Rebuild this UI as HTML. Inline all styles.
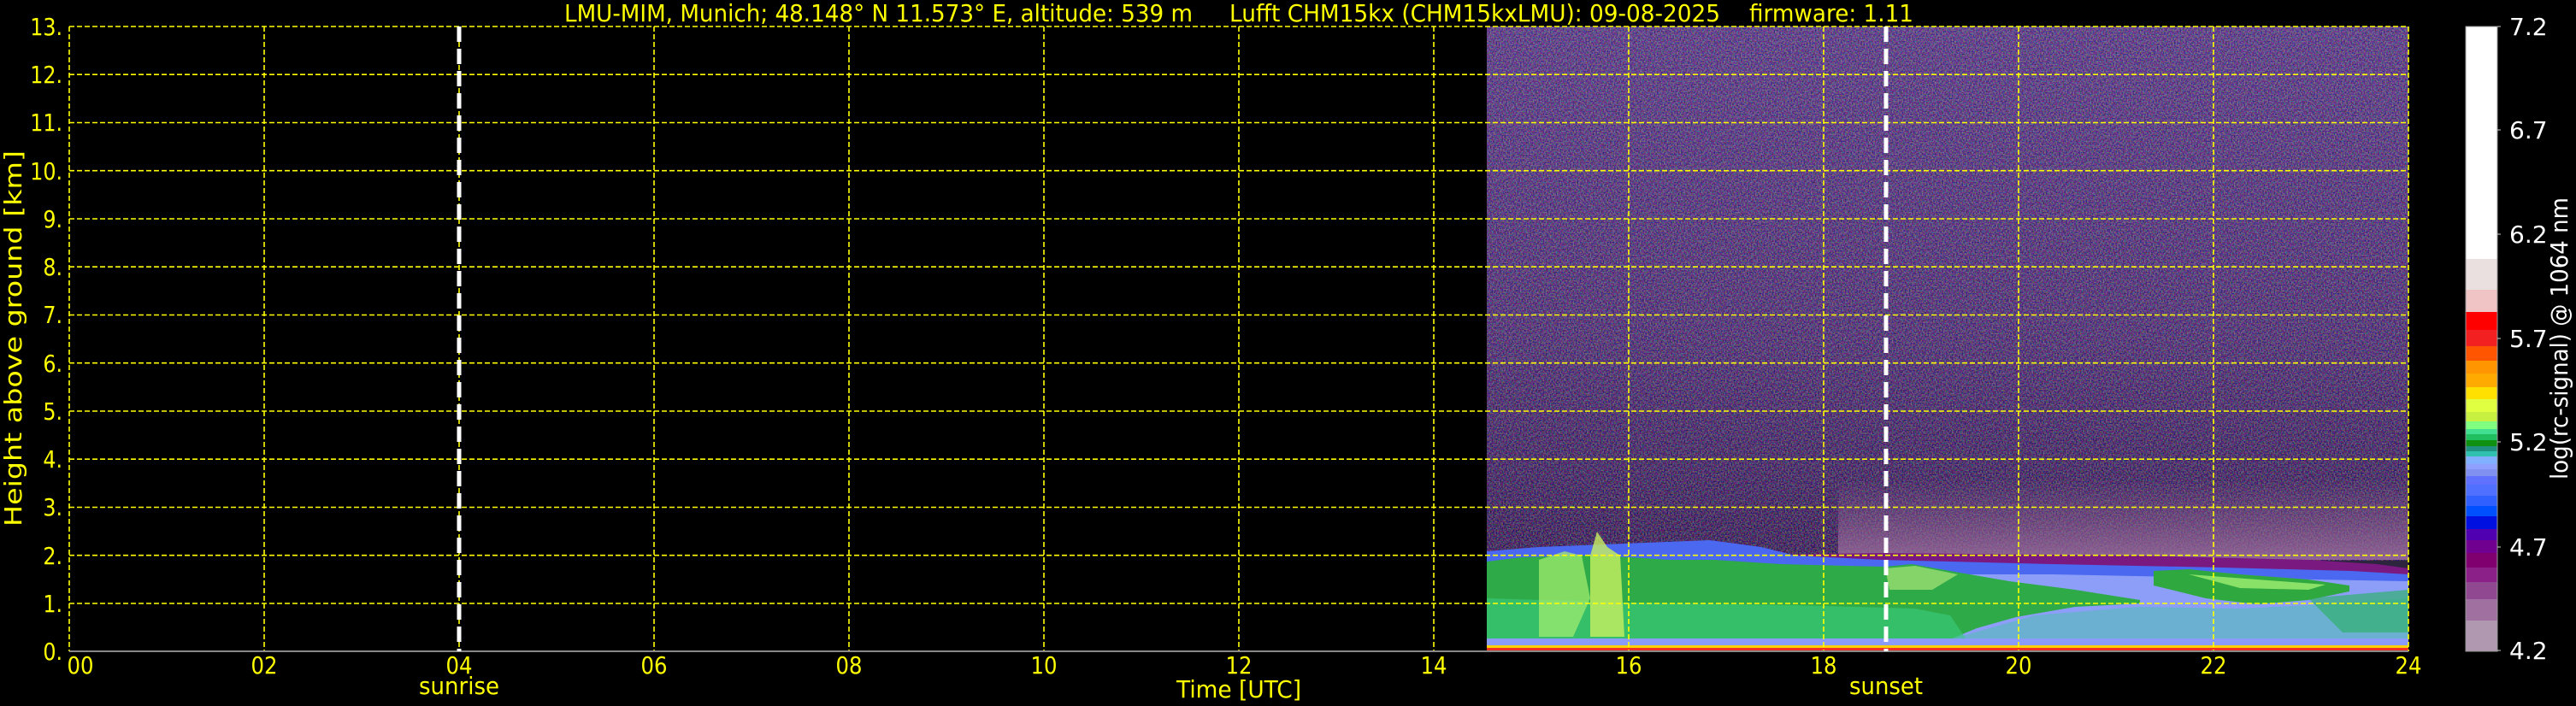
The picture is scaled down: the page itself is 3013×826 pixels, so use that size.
<!DOCTYPE html>
<html><head><meta charset="utf-8"><style>
html,body{margin:0;padding:0;background:#000;}
svg{display:block}
</style></head><body>
<svg width="3013" height="826" viewBox="0 0 3013 826" xmlns="http://www.w3.org/2000/svg" font-family="DejaVu Sans, Liberation Sans, sans-serif">
<defs>
<linearGradient id="bg" x1="0" y1="0" x2="0" y2="1">
<stop offset="0" stop-color="#544676"/><stop offset="0.5" stop-color="#45385f"/><stop offset="0.8" stop-color="#2e2540"/><stop offset="1" stop-color="#2a2038"/>
</linearGradient>
<linearGradient id="pink" x1="0" y1="0" x2="0" y2="1">
<stop offset="0" stop-color="#9a6a9a" stop-opacity="0"/><stop offset="1" stop-color="#a070a0" stop-opacity="0.8"/>
</linearGradient>
<filter id="nz" x="0" y="0" width="100%" height="100%">
<feTurbulence type="fractalNoise" baseFrequency="0.6" numOctaves="1" seed="5"/>
<feColorMatrix type="matrix" values="2.4 0 0 0 -0.9  0 2.4 0 0 -1.1  0 0 2.4 0 -0.7  0 0 0 0 0.35"/>
</filter>
</defs>
<rect width="3013" height="826" fill="#000"/>
<rect x="1739" y="31" width="1078" height="731" fill="url(#bg)"/>
<rect x="1739" y="31" width="1078" height="625" filter="url(#nz)"/>
<rect x="2150" y="560" width="667" height="95" fill="url(#pink)"/>
<polygon points="2000,650 2200,647 2500,650 2700,655 2780,660 2817,665 2817,675 2700,668 2500,664 2300,662 2100,660 2000,658" fill="#7a1a80"/>
<polygon points="1739,645 1800,640 1900,636 2000,632 2060,640 2100,650 2200,655 2400,660 2600,664 2750,668 2817,672 2817,750 1739,750" fill="#4a68f0"/>
<polygon points="2150,672 2400,672 2600,676 2817,680 2817,750 2150,750" fill="#8c9ef8"/>
<polygon points="1739,657 1780,652 1853,650 1907,652 1952,655 2006,655 2083,660 2159,662 2205,663 2236,660 2281,668 2350,680 2427,690 2503,702 2503,706 2427,710 2358,722 2312,735 2281,748 1739,748" fill="#2faa48"/>
<polygon points="1739,700 1900,705 2100,708 2240,712 2281,720 2300,748 1739,748" fill="#38c878" opacity="0.7"/>
<polygon points="2281,748 2380,720 2500,710 2620,712 2700,708 2817,700 2817,748" fill="#50c0b0" opacity="0.55"/>
<polygon points="2700,700 2817,690 2817,740 2740,740" fill="#30b070" opacity="0.7"/>
<polygon points="2519,668 2560,666 2620,672 2700,678 2748,685 2748,692 2700,702 2640,707 2580,700 2519,685" fill="#30a840"/>
<polygon points="2560,672 2640,678 2720,684 2700,690 2620,688" fill="#a0f070" opacity="0.8"/>
<polygon points="1800,655 1830,645 1850,650 1860,700 1840,745 1800,745" fill="#a8f070" opacity="0.7"/>
<polygon points="1860,650 1868,622 1880,640 1895,650 1900,745 1860,745" fill="#c8f060" opacity="0.8"/>
<polygon points="2205,665 2240,662 2290,672 2260,690 2210,690" fill="#c0f080" opacity="0.6"/>
<rect x="1739" y="747" width="1078" height="8" fill="#8a9cf8"/>
<rect x="1739" y="755" width="1078" height="3" fill="#ffd000"/>
<rect x="1739" y="758" width="1078" height="4" fill="#f03020"/>
<g stroke="#ffff00" stroke-width="1.6" stroke-dasharray="6,3" fill="none">
<path d="M81 31H2817M81 87.2H2817M81 143.5H2817M81 199.7H2817M81 256H2817M81 312.2H2817M81 368.5H2817M81 424.7H2817M81 481H2817M81 537.2H2817M81 593.5H2817M81 649.7H2817M81 706H2817M81 762H2817"/>
<path d="M81 31V762M309 31V762M537 31V762M765 31V762M993 31V762M1221 31V762M1449 31V762M1677 31V762M1905 31V762M2133 31V762M2361 31V762M2589 31V762M2817 31V762"/>
</g>
<line x1="81" y1="762" x2="2817" y2="762" stroke="#888" stroke-width="2"/>
<g stroke="#fff" stroke-width="5" stroke-dasharray="18,8">
<line x1="537" y1="31" x2="537" y2="762"/>
<line x1="2206" y1="31" x2="2206" y2="762"/>
</g>
<g font-size="28" fill="#ffff00">
<text x="660" y="25" textLength="735" lengthAdjust="spacingAndGlyphs">LMU-MIM, Munich; 48.148° N 11.573° E, altitude: 539 m</text>
<text x="1438" y="25" textLength="574" lengthAdjust="spacingAndGlyphs">Lufft CHM15kx (CHM15kxLMU): 09-08-2025</text>
<text x="2046" y="25" textLength="192" lengthAdjust="spacingAndGlyphs">firmware: 1.11</text>
</g>
<g font-size="28" fill="#ffff00" text-anchor="end" transform="scale(0.85,1)">
<text x="86" y="41">13.</text><text x="86" y="97">12.</text><text x="86" y="153">11.</text><text x="86" y="210">10.</text><text x="86" y="266">9.</text><text x="86" y="322">8.</text><text x="86" y="378">7.</text><text x="86" y="435">6.</text><text x="86" y="491">5.</text><text x="86" y="547">4.</text><text x="86" y="603">3.</text><text x="86" y="660">2.</text><text x="86" y="716">1.</text><text x="86" y="772">0.</text>
</g>
<text transform="translate(25,396) rotate(-90)" font-size="28" fill="#ffff00" text-anchor="middle" textLength="440" lengthAdjust="spacingAndGlyphs">Height above ground [km]</text>
<g font-size="28" fill="#ffff00" text-anchor="middle">
<text x="94" y="788" textLength="31" lengthAdjust="spacingAndGlyphs">00</text>
<text x="309" y="788" textLength="31" lengthAdjust="spacingAndGlyphs">02</text>
<text x="537" y="788" textLength="31" lengthAdjust="spacingAndGlyphs">04</text>
<text x="765" y="788" textLength="31" lengthAdjust="spacingAndGlyphs">06</text>
<text x="993" y="788" textLength="31" lengthAdjust="spacingAndGlyphs">08</text>
<text x="1221" y="788" textLength="31" lengthAdjust="spacingAndGlyphs">10</text>
<text x="1449" y="788" textLength="31" lengthAdjust="spacingAndGlyphs">12</text>
<text x="1677" y="788" textLength="31" lengthAdjust="spacingAndGlyphs">14</text>
<text x="1905" y="788" textLength="31" lengthAdjust="spacingAndGlyphs">16</text>
<text x="2133" y="788" textLength="31" lengthAdjust="spacingAndGlyphs">18</text>
<text x="2361" y="788" textLength="31" lengthAdjust="spacingAndGlyphs">20</text>
<text x="2589" y="788" textLength="31" lengthAdjust="spacingAndGlyphs">22</text>
<text x="2817" y="788" textLength="31" lengthAdjust="spacingAndGlyphs">24</text>
<text x="537" y="812" textLength="94" lengthAdjust="spacingAndGlyphs">sunrise</text>
<text x="2206" y="812" textLength="86" lengthAdjust="spacingAndGlyphs">sunset</text>
<text x="1449" y="816" textLength="146" lengthAdjust="spacingAndGlyphs">Time [UTC]</text>
</g>
<g>
<rect x="2884" y="31" width="37" height="272" fill="#ffffff"/>
<rect x="2884" y="303" width="37" height="36" fill="#ebe0e0"/>
<rect x="2884" y="339" width="37" height="26" fill="#f0c4c4"/>
<rect x="2884" y="365" width="37" height="21" fill="#ff0000"/>
<rect x="2884" y="386" width="37" height="19" fill="#f22020"/>
<rect x="2884" y="405" width="37" height="17" fill="#ff5500"/>
<rect x="2884" y="422" width="37" height="15" fill="#ff9500"/>
<rect x="2884" y="437" width="37" height="16" fill="#ffaa00"/>
<rect x="2884" y="453" width="37" height="14" fill="#ffe000"/>
<rect x="2884" y="467" width="37" height="15" fill="#e0ff40"/>
<rect x="2884" y="482" width="37" height="11" fill="#c8f040"/>
<rect x="2884" y="493" width="37" height="9" fill="#80ff80"/>
<rect x="2884" y="502" width="37" height="6" fill="#40e090"/>
<rect x="2884" y="508" width="37" height="7" fill="#20c060"/>
<rect x="2884" y="515" width="37" height="7" fill="#109010"/>
<rect x="2884" y="522" width="37" height="6" fill="#209080"/>
<rect x="2884" y="528" width="37" height="6" fill="#30c0b0"/>
<rect x="2884" y="534" width="37" height="9" fill="#80b0ff"/>
<rect x="2884" y="543" width="37" height="6" fill="#90a0ff"/>
<rect x="2884" y="549" width="37" height="8" fill="#8090f0"/>
<rect x="2884" y="557" width="37" height="10" fill="#6070ff"/>
<rect x="2884" y="567" width="37" height="13" fill="#5070ff"/>
<rect x="2884" y="580" width="37" height="12" fill="#3060ff"/>
<rect x="2884" y="592" width="37" height="12" fill="#0050ff"/>
<rect x="2884" y="604" width="37" height="15" fill="#0010e0"/>
<rect x="2884" y="619" width="37" height="13" fill="#5000b0"/>
<rect x="2884" y="632" width="37" height="15" fill="#700090"/>
<rect x="2884" y="647" width="37" height="17" fill="#800070"/>
<rect x="2884" y="664" width="37" height="17" fill="#8a2088"/>
<rect x="2884" y="681" width="37" height="20" fill="#904890"/>
<rect x="2884" y="701" width="37" height="25" fill="#a070a0"/>
<rect x="2884" y="726" width="37" height="36" fill="#b098b0"/>
<rect x="2884" y="31" width="37" height="731" fill="none" stroke="#999" stroke-width="1"/>
<g stroke="#ccc" stroke-width="1"><path d="M2921 31h4M2921 152h4M2921 274h4M2921 396h4M2921 517h4M2921 640h4M2921 761h4"/></g>
<g font-size="28" fill="#ffffff">
<text x="2935" y="41">7.2</text><text x="2935" y="162">6.7</text><text x="2935" y="284">6.2</text><text x="2935" y="406">5.7</text><text x="2935" y="527">5.2</text><text x="2935" y="650">4.7</text><text x="2935" y="771">4.2</text>
</g>
<text transform="translate(3003,396) rotate(-90)" font-size="28" fill="#ffffff" text-anchor="middle" textLength="330" lengthAdjust="spacingAndGlyphs">log(rc-signal) @ 1064 nm</text>
</g>
</svg>
</body></html>
